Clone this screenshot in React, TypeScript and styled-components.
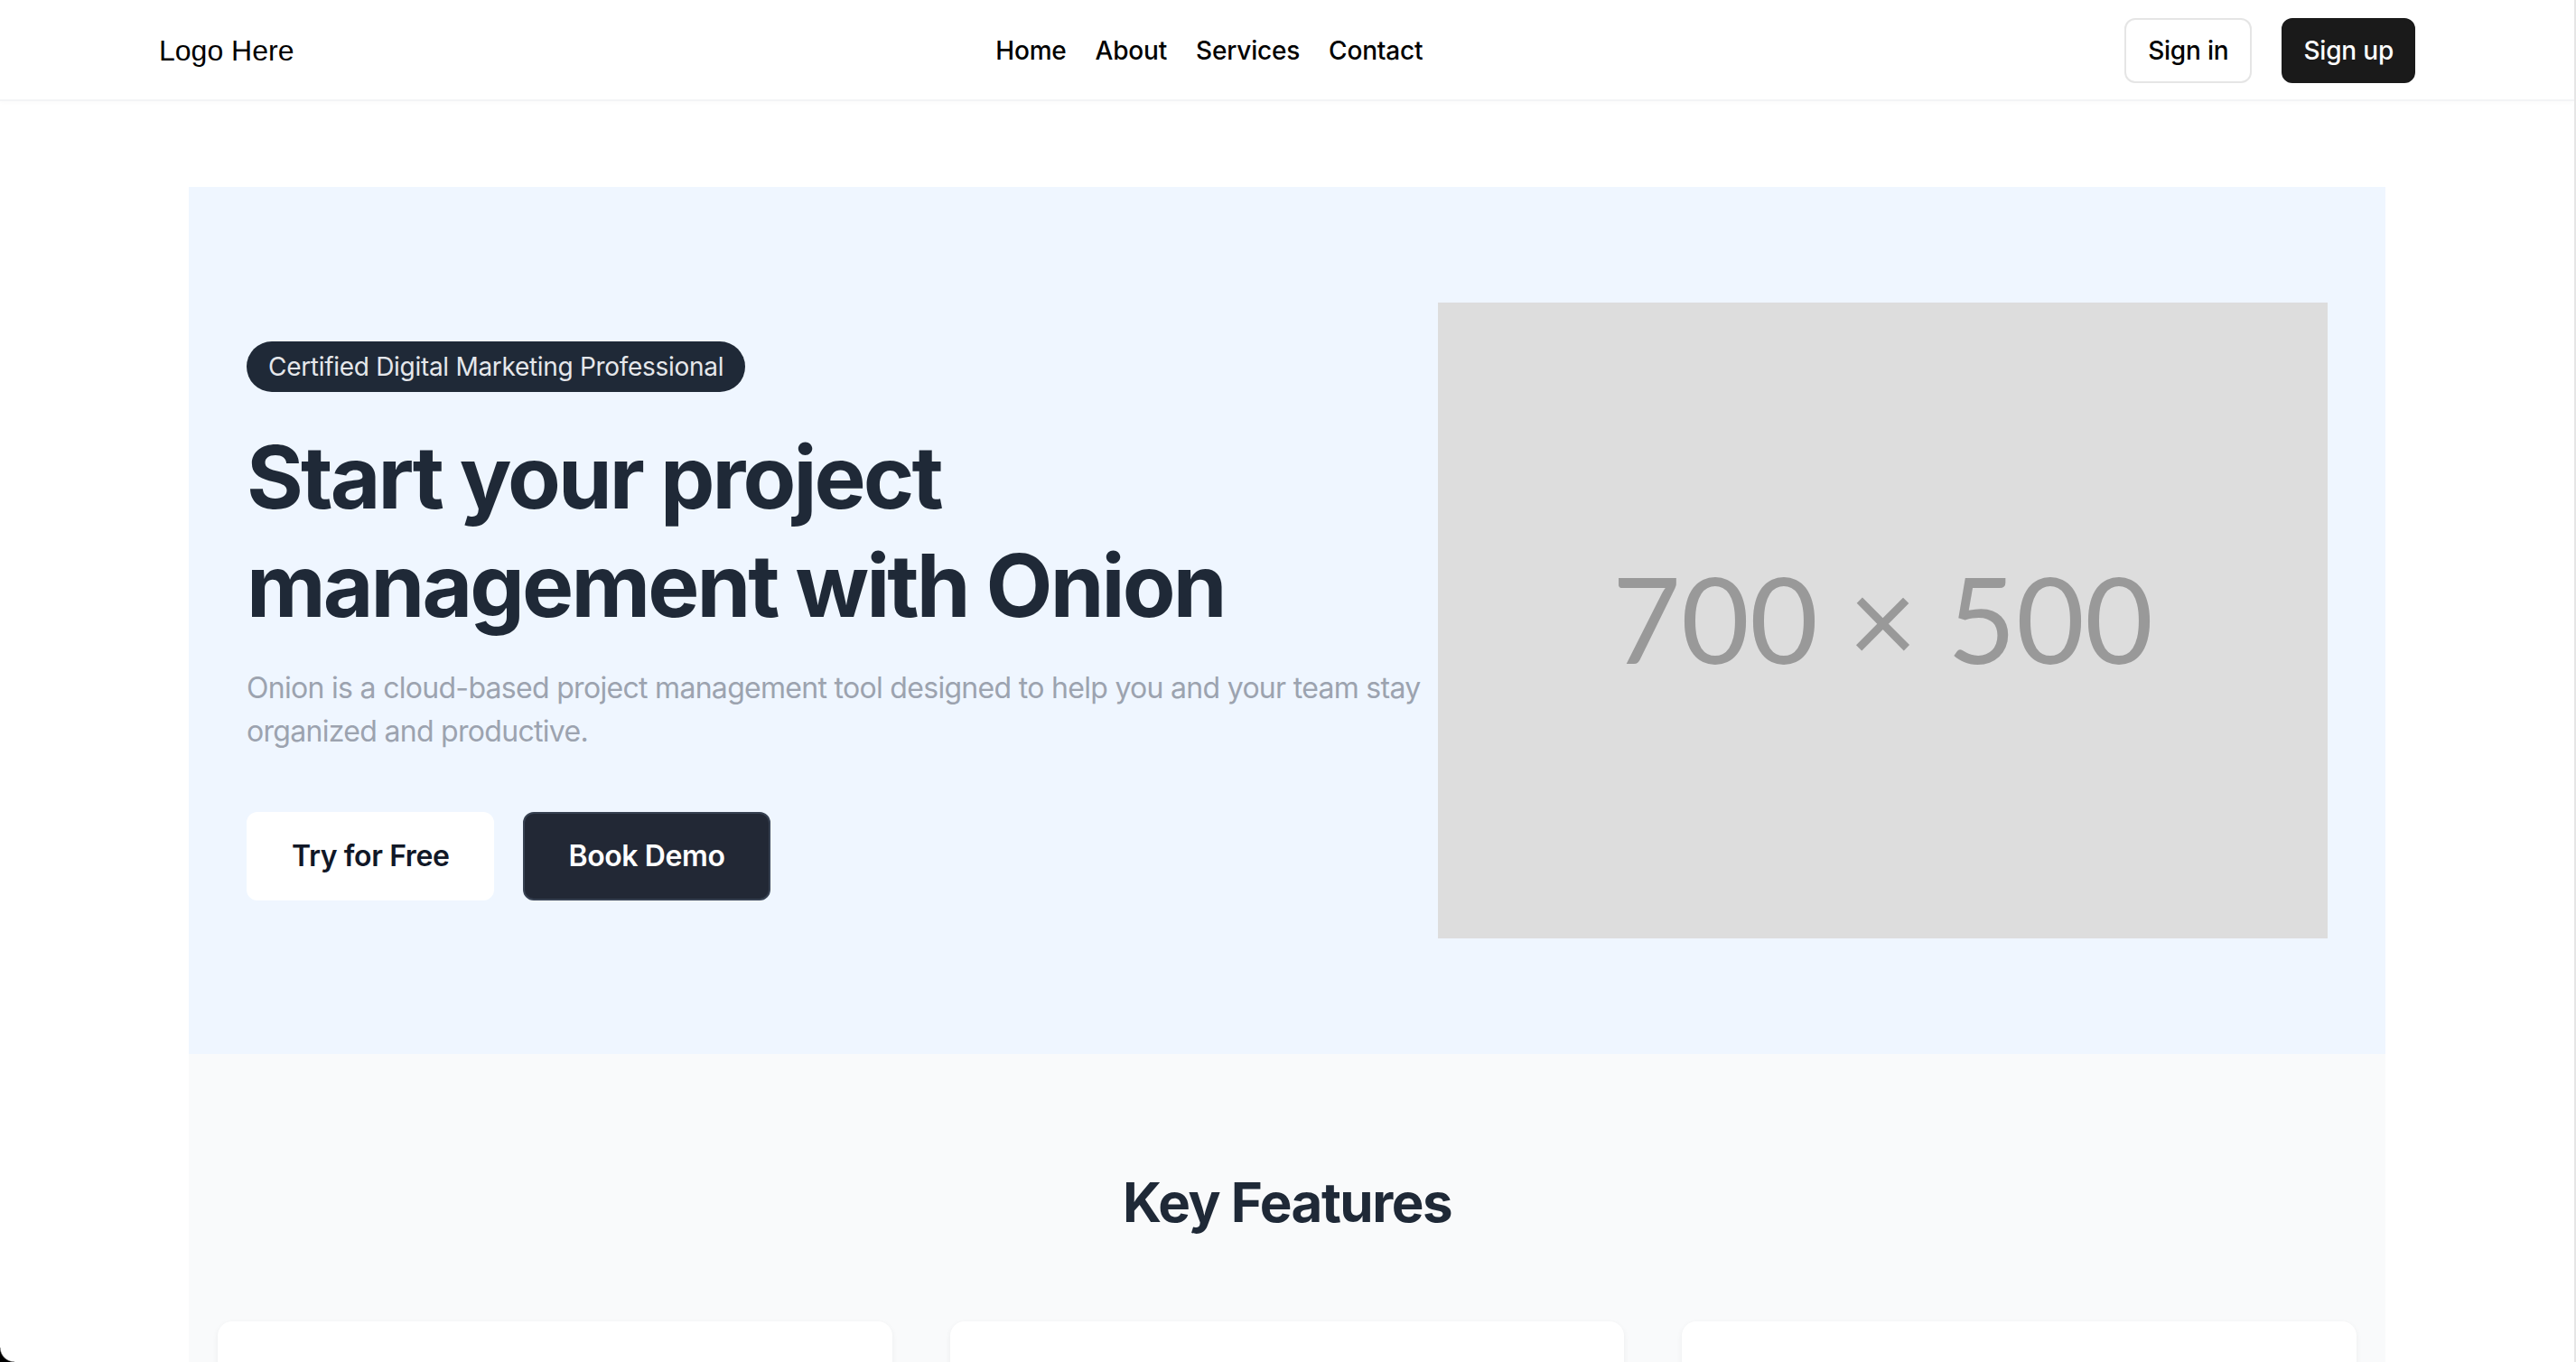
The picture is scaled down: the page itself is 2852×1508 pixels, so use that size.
import React from "react";
import styled, { createGlobalStyle } from "styled-components";

const GlobalStyle = createGlobalStyle`
  html {
    border-right: 2px solid #e6e6e6;
    background: #ffffff;
  }
  body {
    margin: 0;
    background: #ffffff;
    font-family: Inter, "Noto Sans", "Liberation Sans", sans-serif;
    color: #111827;
    -webkit-font-smoothing: antialiased;
  }
  * { box-sizing: border-box; }
`;

const Header = styled.header`
  display: flex;
  align-items: center;
  justify-content: space-between;
  height: 112px;
  padding: 2px 176px 0;
  background: #ffffff;
  border-bottom: 2px solid #f3f4f6;
  box-shadow: 0 2px 4px rgba(0, 0, 0, 0.02);
`;

const Logo = styled.div`
  font-family: "Liberation Sans", Arial, sans-serif;
  font-size: 32px;
  line-height: 48px;
  color: #000000;
`;

const Nav = styled.nav`
  display: flex;
  align-items: center;
  gap: 32px;
`;

const NavLink = styled.a`
  font-size: 28px;
  line-height: 40px;
  font-weight: 500;
  color: #000000;
  text-decoration: none;
  letter-spacing: -0.2px;
`;

const AuthGroup = styled.div`
  display: flex;
  align-items: center;
  gap: 33px;
`;

const AuthButton = styled.button<{ $primary?: boolean }>`
  height: 72px;
  padding: 0 ${(p) => (p.$primary ? "22px" : "24px")};
  border-radius: 12px;
  font-family: Inter, sans-serif;
  font-size: 28px;
  font-weight: 500;
  letter-spacing: -0.2px;
  cursor: pointer;
  border: 2px solid ${(p) => (p.$primary ? "#1a1a1a" : "#e5e5e5")};
  background: ${(p) => (p.$primary ? "#1a1a1a" : "#ffffff")};
  color: ${(p) => (p.$primary ? "#ffffff" : "#000000")};
`;

const Main = styled.main`
  width: 2432px;
  margin: 0 auto;
  padding-top: 95px;
`;

const Hero = styled.section`
  display: flex;
  align-items: center;
  padding: 128px 64px;
  background: #eff6ff;
`;

const HeroText = styled.div`
  flex: 1;
  min-width: 0;
`;

const Badge = styled.span`
  display: inline-block;
  padding: 8px 24px;
  border-radius: 9999px;
  background: #1f2937;
  color: #e5e7eb;
  font-size: 28px;
  line-height: 40px;
  letter-spacing: -0.3px;
`;

const Title = styled.h1`
  margin: 34px 0 30px;
  font-size: 96px;
  line-height: 120px;
  font-weight: 700;
  letter-spacing: -0.03em;
  color: #1f2937;
`;

const Lead = styled.p`
  margin: 0 0 65px;
  font-size: 32px;
  line-height: 48px;
  color: #9ca3af;
  letter-spacing: -0.7px;
`;

const ButtonRow = styled.div`
  display: flex;
  gap: 32px;
`;

const CtaButton = styled.button<{ $dark?: boolean }>`
  height: 98px;
  padding: 0 48px;
  border-radius: 12px;
  font-family: Inter, sans-serif;
  font-size: 32px;
  font-weight: 600;
  letter-spacing: -0.4px;
  cursor: pointer;
  border: 2px solid ${(p) => (p.$dark ? "#374151" : "#ffffff")};
  background: ${(p) => (p.$dark ? "#222835" : "#ffffff")};
  color: ${(p) => (p.$dark ? "#ffffff" : "#111827")};
`;

const Placeholder = styled.div`
  flex-shrink: 0;
  width: 985px;
  height: 704px;
  padding-bottom: 6px;
  display: flex;
  align-items: center;
  justify-content: center;
  background: #dddddd;
  color: #999999;
  font-family: Lato, "Open Sans", sans-serif;
  font-size: 131px;
  font-weight: 400;
`;

const Features = styled.section`
  padding: 128px 32px;
  background: #f9fafb;
`;

const SectionTitle = styled.h2`
  margin: 0 0 96px;
  text-align: center;
  font-size: 60px;
  line-height: 72px;
  font-weight: 700;
  letter-spacing: -0.025em;
  color: #1f2937;
`;

const CardGrid = styled.div`
  display: grid;
  grid-template-columns: repeat(3, 1fr);
  gap: 64px;
`;

const Card = styled.div`
  padding: 64px 48px;
  border-radius: 16px;
  background: #ffffff;
  box-shadow: 0 2px 6px rgba(0, 0, 0, 0.06);
`;

const CardTitle = styled.h3`
  margin: 0 0 16px;
  font-size: 40px;
  font-weight: 700;
  color: #1f2937;
`;

const CardText = styled.p`
  margin: 0;
  font-size: 32px;
  line-height: 48px;
  color: #6b7280;
`;

const WindowCorner = styled.div`
  position: fixed;
  left: 0;
  bottom: 0;
  width: 16px;
  height: 16px;
  pointer-events: none;
  background: radial-gradient(circle at 100% 0, transparent 15px, #000 16.5px);
`;

const features = [
  { title: "Task Management", text: "Organize tasks, set priorities and track progress in one place." },
  { title: "Team Collaboration", text: "Share files, discuss ideas and keep everyone on the same page." },
  { title: "Progress Reports", text: "Get clear insights into how your projects are moving forward." },
];

export default function App() {
  return (
    <>
      <GlobalStyle />
      <Header>
        <Logo>Logo Here</Logo>
        <Nav>
          <NavLink href="#">Home</NavLink>
          <NavLink href="#">About</NavLink>
          <NavLink href="#">Services</NavLink>
          <NavLink href="#">Contact</NavLink>
        </Nav>
        <AuthGroup>
          <AuthButton>Sign in</AuthButton>
          <AuthButton $primary>Sign up</AuthButton>
        </AuthGroup>
      </Header>
      <Main>
        <Hero>
          <HeroText>
            <Badge>Certified Digital Marketing Professional</Badge>
            <Title>
              Start your project
              <br />
              management with Onion
            </Title>
            <Lead>
              Onion is a cloud-based project management tool designed to help you and your team stay organized and
              productive.
            </Lead>
            <ButtonRow>
              <CtaButton>Try for Free</CtaButton>
              <CtaButton $dark>Book Demo</CtaButton>
            </ButtonRow>
          </HeroText>
          <Placeholder>700 × 500</Placeholder>
        </Hero>
        <Features>
          <SectionTitle>Key Features</SectionTitle>
          <CardGrid>
            {features.map((f) => (
              <Card key={f.title}>
                <CardTitle>{f.title}</CardTitle>
                <CardText>{f.text}</CardText>
              </Card>
            ))}
          </CardGrid>
        </Features>
      </Main>
      <WindowCorner />
    </>
  );
}
